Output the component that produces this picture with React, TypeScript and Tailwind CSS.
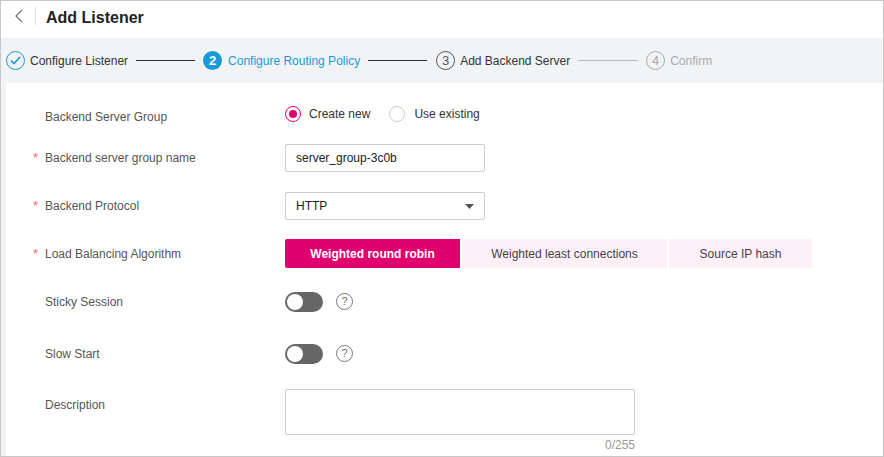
import React from "react";

const Circle = ({ n, color, text }: { n: string; color: string; text: string }) => (
  <span className={`w-[19px] h-[19px] rounded-full border flex items-center justify-center text-[13px] ${color} ${text}`}>{n}</span>
);

const Row = ({ label, req, children, h }: any) => (
  <div className="flex items-center" style={{ height: h }}>
    <div className="w-[252px] flex items-center text-[12px] text-[#555]">
      <span className="w-[12px] text-[#f66] text-[13px]">{req ? "*" : ""}</span>
      <span>{label}</span>
    </div>
    {children}
  </div>
);

const Toggle = () => (
  <div className="flex items-center gap-[13px]">
    <div className="w-[38px] h-[20px] rounded-full bg-[#666] relative">
      <div className="absolute left-[2px] top-[2px] w-[16px] h-[16px] rounded-full bg-white" />
    </div>
    <span className="w-[17px] h-[17px] rounded-full border border-[#777] text-[#777] text-[11px] flex items-center justify-center">?</span>
  </div>
);

export default function App() {
  return (
    <div className="w-[884px] h-[457px] border border-[#c8c8c8] bg-[#f2f3f5] overflow-hidden flex flex-col" style={{ fontFamily: "'Liberation Sans', Arial, sans-serif" }}>
      <div className="h-[37px] bg-white flex items-start pt-[5px] shrink-0">
        <svg width="10" height="14" viewBox="0 0 10 14" className="ml-[13px] mt-[3px]"><path d="M8 1 L2 7 L8 13" stroke="#777" strokeWidth="1.3" fill="none" /></svg>
        <div className="w-px h-[18px] bg-[#ddd] ml-[11px] mt-[1px]" />
        <span className="ml-[10px] text-[16px] font-bold text-[#222]">Add Listener</span>
      </div>
      <div className="h-[45px] flex items-center pl-[5px] text-[12px] shrink-0">
        <span className="w-[19px] h-[19px] rounded-full border border-[#1a9bd7] flex items-center justify-center">
          <svg width="11" height="9" viewBox="0 0 11 9"><path d="M1 4.5 L4 7.5 L10 1" stroke="#1a9bd7" strokeWidth="1.6" fill="none" /></svg>
        </span>
        <span className="ml-[5px] text-[#333]">Configure Listener</span>
        <div className="w-[59px] h-px bg-[#333] ml-[8px] mr-[8px]" />
        <span className="w-[19px] h-[19px] rounded-full bg-[#1a9bd7] text-white text-[13px] font-bold flex items-center justify-center">2</span>
        <span className="ml-[6px] text-[#1a9bd7]">Configure Routing Policy</span>
        <div className="w-[59px] h-px bg-[#333] ml-[8px] mr-[9px]" />
        <Circle n="3" color="border-[#555]" text="text-[#555]" />
        <span className="ml-[5px] text-[#333]">Add Backend Server</span>
        <div className="w-[60px] h-px bg-[#bbb] ml-[8px] mr-[8px]" />
        <Circle n="4" color="border-[#aaa]" text="text-[#aaa]" />
        <span className="ml-[5px] text-[#aaa]">Confirm</span>
      </div>
      <div className="flex-1 bg-white ml-[5px] pl-[27px] pt-[16px] flex flex-col">
        <Row label="Backend Server Group" h={36}>
          <div className="flex items-center text-[12px] text-[#333] -mt-[7px]">
            <span className="w-[16px] h-[16px] rounded-full border border-[#e0006e] flex items-center justify-center"><span className="w-[8px] h-[8px] rounded-full bg-[#e0006e]" /></span>
            <span className="ml-[8px]">Create new</span>
            <span className="ml-[19px] w-[16px] h-[16px] rounded-full border border-[#ccc]" />
            <span className="ml-[9px]">Use existing</span>
          </div>
        </Row>
        <div className="h-[9px]" />
        <Row label="Backend server group name" req h={28}>
          <div className="w-[200px] h-[28px] border border-[#ccc] rounded-[2px] flex items-center px-[10px] text-[12px] text-[#222]">server_group-3c0b</div>
        </Row>
        <div className="h-[20px]" />
        <Row label="Backend Protocol" req h={28}>
          <div className="w-[200px] h-[28px] border border-[#ccc] rounded-[2px] flex items-center justify-between px-[10px] text-[12px] text-[#222]">
            HTTP
            <svg width="9" height="5" viewBox="0 0 9 5"><path d="M0 0 H9 L4.5 5 Z" fill="#555" /></svg>
          </div>
        </Row>
        <div className="h-[19px]" />
        <Row label="Load Balancing Algorithm" req h={29}>
          <div className="flex gap-[2px] text-[12px]">
            <div className="w-[175px] h-[29px] bg-[#e0006e] text-white font-bold flex items-center justify-center rounded-l-[2px]">Weighted round robin</div>
            <div className="w-[205px] h-[29px] bg-[#fdf0f6] text-[#444] flex items-center justify-center">Weighted least connections</div>
            <div className="w-[143px] h-[29px] bg-[#fdf0f6] text-[#444] flex items-center justify-center">Source IP hash</div>
          </div>
        </Row>
        <div className="h-[23px]" />
        <Row label="Sticky Session" h={21}><Toggle /></Row>
        <div className="h-[31px]" />
        <Row label="Slow Start" h={21}><Toggle /></Row>
        <div className="h-[25px]" />
        <div className="flex items-start">
          <div className="w-[252px] pl-[12px] text-[12px] text-[#555] pt-[7px]">Description</div>
          <div className="flex flex-col items-end">
            <div className="w-[350px] h-[46px] border border-[#ccc] rounded-[2px]" />
            <span className="text-[12px] text-[#999] mt-[1px]">0/255</span>
          </div>
        </div>
      </div>
    </div>
  );
}
